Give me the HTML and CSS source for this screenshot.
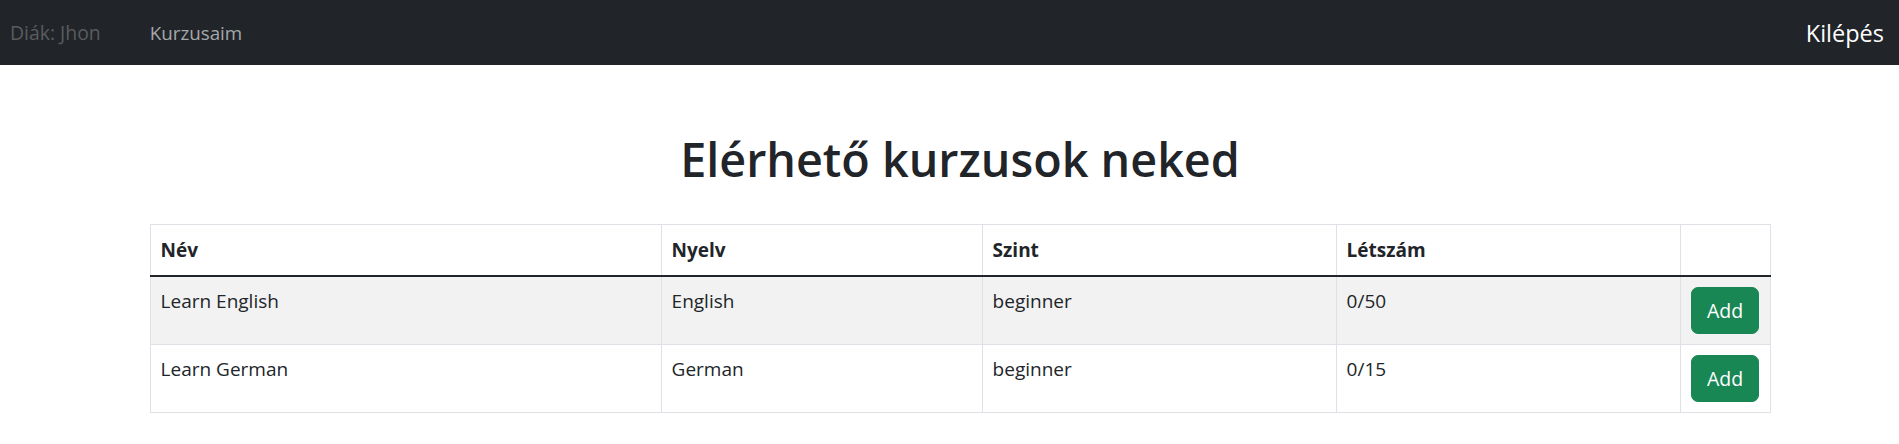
FILE: index.html
```html
<!DOCTYPE html>
<html lang="hu">
<head>
<meta charset="utf-8">
<title>Elérhető kurzusok</title>
<link rel="stylesheet" href="styles.css">
</head>
<body>
<nav class="navbar">
  <div class="nav-left">
    <span class="nav-user">Diák: Jhon</span>
    <a class="nav-link" href="#">Kurzusaim</a>
  </div>
  <a class="nav-logout" href="#">Kilépés</a>
</nav>
<main class="container">
  <h1 class="title">Elérhető kurzusok neked</h1>
  <table class="courses">
    <colgroup>
      <col class="c-name"><col class="c-lang"><col class="c-level"><col class="c-count"><col class="c-act">
    </colgroup>
    <thead>
      <tr><th>Név</th><th>Nyelv</th><th>Szint</th><th>Létszám</th><th></th></tr>
    </thead>
    <tbody>
      <tr class="striped"><td>Learn English</td><td>English</td><td>beginner</td><td>0/50</td><td><button class="btn-add">Add</button></td></tr>
      <tr><td>Learn German</td><td>German</td><td>beginner</td><td>0/15</td><td><button class="btn-add">Add</button></td></tr>
    </tbody>
  </table>
</main>
</body>
</html>
```
FILE: styles.css
```css
html, body {
  margin: 0;
  padding: 0;
}
body {
  font-family: "Open Sans", "Noto Sans", sans-serif;
  font-size: 19px;
  color: #212529;
  background: #fff;
}
.navbar {
  height: 65px;
  background: #212529;
  display: flex;
  align-items: center;
  justify-content: space-between;
  padding: 0 15px 0 10px;
  box-sizing: border-box;
}
.nav-left {
  display: flex;
  align-items: center;
  gap: 49px;
}
.nav-user {
  color: #595c5f;
  font-size: 19.4px;
}
.nav-link {
  color: #a6a8a9;
  text-decoration: none;
  font-size: 18.8px;
}
.nav-logout {
  color: #fff;
  text-decoration: none;
  font-size: 23.5px;
}
.container {
  width: 1620px;
  margin-left: 150px;
}
.title {
  text-align: center;
  font-size: 46.7px;
  font-weight: 600;
  line-height: 1.2;
  margin: 66px 0 37px;
}
.courses {
  width: 100%;
  border-collapse: collapse;
  border: 1px solid #dee2e6;
  table-layout: fixed;
}
.c-name { width: 511px; }
.c-lang { width: 321px; }
.c-level { width: 354px; }
.c-count { width: 344px; }
.c-act { width: 90px; }
.courses th,
.courses td {
  border: 1px solid #dee2e6;
  padding: 10px 9.6px;
  text-align: left;
  vertical-align: top;
  line-height: 28.8px;
}
.courses th {
  font-weight: 700;
  padding-top: 11px;
  padding-bottom: 10px;
}
.courses thead th {
  border-bottom: 2px solid #212529;
}
.courses .striped td {
  background: #f2f2f2;
}
.btn-add {
  background: #198754;
  color: #fff;
  border: 1px solid #198754;
  border-radius: 7px;
  font-family: inherit;
  font-size: 19.5px;
  height: 47px;
  width: 68px;
  padding: 0;
  cursor: pointer;
  display: block;
}
.courses td:last-child {
  padding: 10px 9px 10px 10px;
}
```
